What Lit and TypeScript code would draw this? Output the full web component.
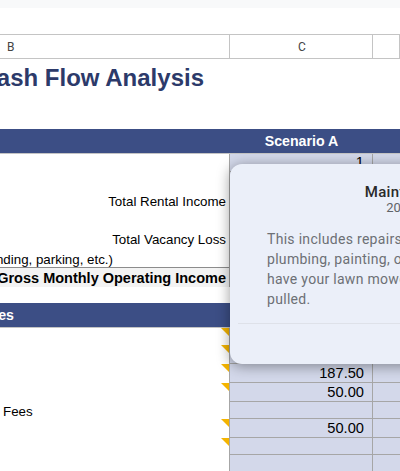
import { LitElement, html, css } from 'lit';
import { customElement } from 'lit/decorators.js';

interface Row {
  h: number;
  b?: string;
  c?: string;
  kind?: string;
  pad?: number;
  flag?: boolean;
}

const ROWS: Row[] = [
  { h: 18, c: '1' },
  { h: 19 },
  { h: 19, b: 'Total Rental Income' },
  { h: 19 },
  { h: 19, b: 'Total Vacancy Loss' },
  { h: 20, b: 'Other Income (laundry, vending, parking, etc.)', pad: 116, kind: 'ruled' },
  { h: 19, b: 'Effective Gross Monthly Operating Income', kind: 'gross' },
  { h: 16, kind: 'plain' },
];

const EXPENSES: Row[] = [
  { h: 17, flag: true },
  { h: 19, flag: true },
  { h: 19, flag: true, c: '187.50' },
  { h: 19, flag: true, c: '50.00' },
  { h: 17, b: 'Fees', kind: 'left' },
  { h: 19, flag: true, c: '50.00' },
  { h: 17, flag: true },
  { h: 17 },
];

@customElement('app-root')
export class AppRoot extends LitElement {
  static styles = css`
    :host {
      display: block;
      position: relative;
      width: 400px;
      height: 471px;
      overflow: hidden;
      background: #fff;
      font-family: 'Liberation Sans', Arial, sans-serif;
      font-size: 13.33px;
      color: #000;
    }
    .topbar {
      height: 8px;
      background: #f8f9fa;
    }
    .spacer {
      height: 26px;
    }
    .row {
      display: grid;
      grid-template-columns: 229px 144px 1fr;
      box-sizing: border-box;
    }
    .heads {
      grid-template-columns: 230px 143px 1fr;
      height: 25px;
      border-top: 1px solid #c4c4c4;
      border-bottom: 1px solid #c4c4c4;
      font-family: Roboto, sans-serif;
      font-size: 12px;
      color: #444;
      line-height: 24px;
      text-align: center;
    }
    .heads div {
      border-right: 1px solid #c4c4c4;
    }
    .heads .name-b {
      text-align: left;
      padding-left: 7px;
    }
    .heads .name-c {
      padding-left: 2px;
    }
    .title {
      height: 70px;
      display: flex;
      width: 204px;
      justify-content: flex-end;
      white-space: nowrap;
      font-size: 24px;
      font-weight: 700;
      line-height: 37px;
      color: #2c3a6a;
    }
    .band {
      grid-template-columns: 230px 143px 1fr;
      height: 25px;
      background: #3c4e85;
      border-bottom: 1px solid #c4c4c4;
      color: #fff;
      font-weight: 700;
      font-size: 14.2px;
      line-height: 24px;
    }
    .band .scenario {
      text-align: center;
    }
    .band .section {
      display: flex;
      justify-content: flex-end;
      width: 14px;
      white-space: nowrap;
    }
    .b {
      position: relative;
      display: flex;
      justify-content: flex-end;
      align-items: center;
      min-width: 0;
      white-space: nowrap;
      box-sizing: border-box;
      padding-top: 2px;
      padding-right: 3px;
    }
    .c,
    .d {
      display: flex;
      justify-content: flex-end;
      align-items: center;
      background: #d3d8ea;
      border-right: 1px solid #a6a6a6;
      border-bottom: 1px solid #a6a6a6;
      box-sizing: border-box;
      padding-right: 8px;
      padding-bottom: 1px;
      font-size: 14.67px;
    }
    .c {
      border-left: 1px solid #a6a6a6;
    }
    .d {
      border-right: none;
    }
    .ruled .b {
      border-bottom: 1px solid #8c8c8c;
      padding-top: 4px;
    }
    .gross .b {
      background: #f3f3f3;
      font-weight: 700;
      font-size: 14.5px;
      padding-top: 0;
    }
    .plain .c,
    .plain .d {
      background: #fff;
      border: none;
    }
    .left .b {
      justify-content: flex-start;
      padding-left: 3px;
    }
    .flag {
      position: absolute;
      top: 0;
      right: 0;
      width: 8px;
      height: 8px;
      background: #f4b400;
      clip-path: polygon(0 0, 100% 0, 100% 100%);
    }
    .modal {
      position: absolute;
      top: 164px;
      left: 230px;
      width: 360px;
      height: 200px;
      box-sizing: border-box;
      background: #ebeff9;
      border-radius: 12px;
      box-shadow: 0 2px 14px rgba(0, 0, 0, 0.4);
      font-family: Roboto, sans-serif;
      text-align: center;
    }
    .modal h2 {
      margin: 19px 0 0;
      font-size: 15px;
      font-weight: 500;
      line-height: 18px;
      color: #2a2a2a;
      letter-spacing: 0.3px;
    }
    .modal .sub {
      font-size: 13px;
      line-height: 14px;
      color: #5f6368;
    }
    .modal p {
      margin: 14px 0 0;
      padding-left: 37px;
      text-align: left;
      font-size: 14px;
      line-height: 20px;
      color: #6d7075;
      white-space: nowrap;
      letter-spacing: 0.3px;
    }
    .modal hr {
      border: none;
      border-top: 1px solid #dee1e9;
      margin: 14px 8px 0;
    }
  `;

  private renderRow(r: Row) {
    return html`
      <div class="row ${r.kind ?? ''}" style="height:${r.h}px">
        <div class="b" style=${r.pad ? `padding-right:${r.pad}px` : ''}>
          ${r.b ?? ''}${r.flag ? html`<span class="flag"></span>` : ''}
        </div>
        <div class="c">${r.c ?? ''}</div>
        <div class="d"></div>
      </div>
    `;
  }

  render() {
    return html`
      <div class="topbar"></div>
      <div class="spacer"></div>
      <div class="row heads">
        <div class="name-b">B</div>
        <div class="name-c">C</div>
        <div></div>
      </div>
      <div class="title"><span>Cash Flow Analysis</span></div>
      <div class="row band">
        <div></div>
        <div class="scenario">Scenario A</div>
        <div></div>
      </div>
      ${ROWS.map((r) => this.renderRow(r))}
      <div class="row band">
        <div class="section"><span>Operating Expenses</span></div>
        <div></div>
        <div></div>
      </div>
      ${EXPENSES.map((r) => this.renderRow(r))}
      <section class="modal">
        <h2>Maintenance</h2>
        <div class="sub">2024-25</div>
        <p>
          This includes repairs to your home,<br />
          plumbing, painting, or electrical work,<br />
          have your lawn mowed or your weeds<br />
          pulled.
        </p>
        <hr />
      </section>
    `;
  }
}
